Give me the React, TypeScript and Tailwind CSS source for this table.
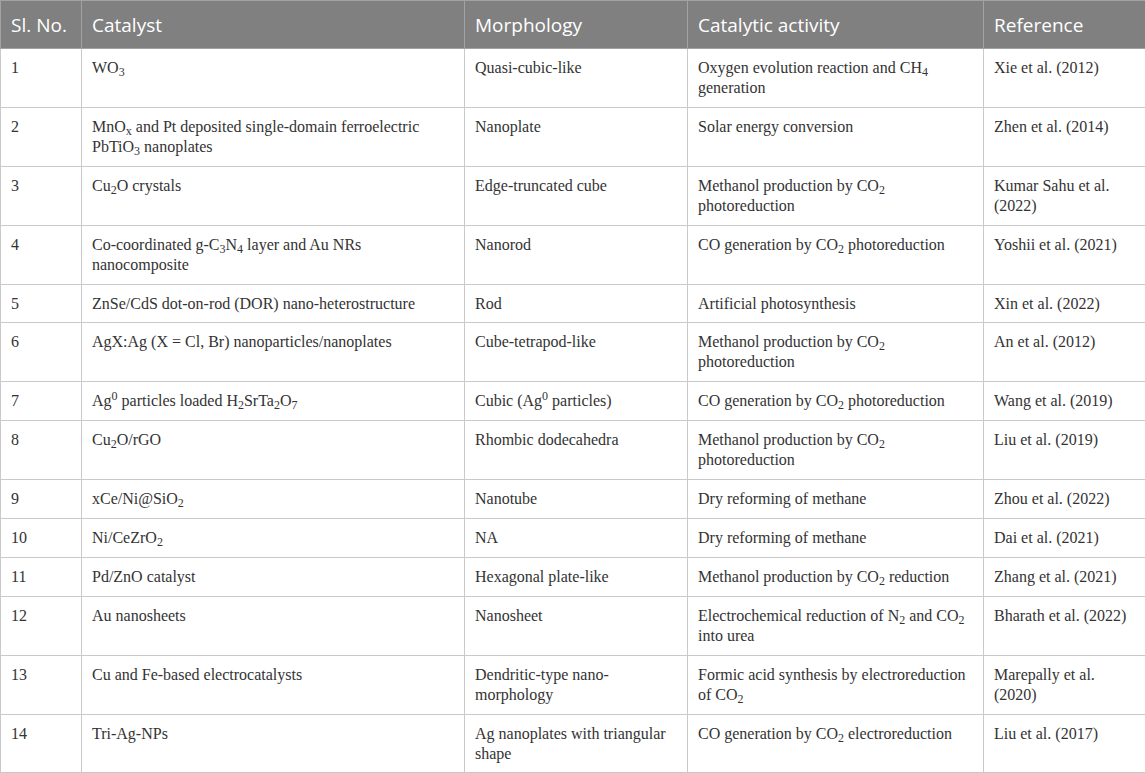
import React from 'react';

type Row = {
  no: string;
  catalyst: React.ReactNode;
  morphology: React.ReactNode;
  activity: React.ReactNode;
  reference: React.ReactNode;
};

// line breaks follow the printed table
const rows: Row[] = [
  {
    no: '1',
    catalyst: <>WO<sub>3</sub></>,
    morphology: 'Quasi-cubic-like',
    activity: <>Oxygen evolution reaction and CH<sub>4</sub><br />generation</>,
    reference: 'Xie et al. (2012)',
  },
  {
    no: '2',
    catalyst: <>MnO<sub>x</sub> and Pt deposited single-domain ferroelectric<br />PbTiO<sub>3</sub> nanoplates</>,
    morphology: 'Nanoplate',
    activity: 'Solar energy conversion',
    reference: 'Zhen et al. (2014)',
  },
  {
    no: '3',
    catalyst: <>Cu<sub>2</sub>O crystals</>,
    morphology: 'Edge-truncated cube',
    activity: <>Methanol production by CO<sub>2</sub><br />photoreduction</>,
    reference: <>Kumar Sahu et al.<br />(2022)</>,
  },
  {
    no: '4',
    catalyst: <>Co-coordinated g-C<sub>3</sub>N<sub>4</sub> layer and Au NRs<br />nanocomposite</>,
    morphology: 'Nanorod',
    activity: <>CO generation by CO<sub>2</sub> photoreduction</>,
    reference: 'Yoshii et al. (2021)',
  },
  {
    no: '5',
    catalyst: 'ZnSe/CdS dot-on-rod (DOR) nano-heterostructure',
    morphology: 'Rod',
    activity: 'Artificial photosynthesis',
    reference: 'Xin et al. (2022)',
  },
  {
    no: '6',
    catalyst: 'AgX:Ag (X = Cl, Br) nanoparticles/nanoplates',
    morphology: 'Cube-tetrapod-like',
    activity: <>Methanol production by CO<sub>2</sub><br />photoreduction</>,
    reference: 'An et al. (2012)',
  },
  {
    no: '7',
    catalyst: <>Ag<sup>0</sup> particles loaded H<sub>2</sub>SrTa<sub>2</sub>O<sub>7</sub></>,
    morphology: <>Cubic (Ag<sup>0</sup> particles)</>,
    activity: <>CO generation by CO<sub>2</sub> photoreduction</>,
    reference: 'Wang et al. (2019)',
  },
  {
    no: '8',
    catalyst: <>Cu<sub>2</sub>O/rGO</>,
    morphology: 'Rhombic dodecahedra',
    activity: <>Methanol production by CO<sub>2</sub><br />photoreduction</>,
    reference: 'Liu et al. (2019)',
  },
  {
    no: '9',
    catalyst: <>xCe/Ni@SiO<sub>2</sub></>,
    morphology: 'Nanotube',
    activity: 'Dry reforming of methane',
    reference: 'Zhou et al. (2022)',
  },
  {
    no: '10',
    catalyst: <>Ni/CeZrO<sub>2</sub></>,
    morphology: 'NA',
    activity: 'Dry reforming of methane',
    reference: 'Dai et al. (2021)',
  },
  {
    no: '11',
    catalyst: 'Pd/ZnO catalyst',
    morphology: 'Hexagonal plate-like',
    activity: <>Methanol production by CO<sub>2</sub> reduction</>,
    reference: 'Zhang et al. (2021)',
  },
  {
    no: '12',
    catalyst: 'Au nanosheets',
    morphology: 'Nanosheet',
    activity: <>Electrochemical reduction of N<sub>2</sub> and CO<sub>2</sub><br />into urea</>,
    reference: 'Bharath et al. (2022)',
  },
  {
    no: '13',
    catalyst: 'Cu and Fe-based electrocatalysts',
    morphology: <>Dendritic-type nano-<br />morphology</>,
    activity: <>Formic acid synthesis by electroreduction<br />of CO<sub>2</sub></>,
    reference: <>Marepally et al.<br />(2020)</>,
  },
  {
    no: '14',
    catalyst: 'Tri-Ag-NPs',
    morphology: <>Ag nanoplates with triangular<br />shape</>,
    activity: <>CO generation by CO<sub>2</sub> electroreduction</>,
    reference: 'Liu et al. (2017)',
  },
];

const headers = ['Sl. No.', 'Catalyst', 'Morphology', 'Catalytic activity', 'Reference'];
const widths = ['w-[81px]', 'w-[383px]', 'w-[223px]', 'w-[296px]', 'w-[162px]'];

const cell = 'border border-[#c9c9c9] pl-[10px] pr-[4px] pt-[9px] pb-[8.9px] align-top';

export default function App() {
  return (
    <div className="w-[1145px] h-[773px] bg-white overflow-hidden">
      <table className="table-fixed border-collapse w-[1145px] text-[16px] leading-[20px] text-[#333] font-['Liberation_Serif',serif]">
        <thead>
          <tr className="h-[48px] bg-[#808080]">
            {headers.map((h, i) => (
              <th
                key={h}
                className={`${widths[i]} border border-[#a2a2a2] px-[10px] text-left align-middle font-normal text-white text-[19px] font-['Open_Sans',sans-serif]`}
              >
                {h}
              </th>
            ))}
          </tr>
        </thead>
        <tbody>
          {rows.map((r) => (
            <tr key={r.no}>
              <td className={cell}>{r.no}</td>
              <td className={cell}>{r.catalyst}</td>
              <td className={cell}>{r.morphology}</td>
              <td className={cell}>{r.activity}</td>
              <td className={cell}>{r.reference}</td>
            </tr>
          ))}
        </tbody>
      </table>
    </div>
  );
}
